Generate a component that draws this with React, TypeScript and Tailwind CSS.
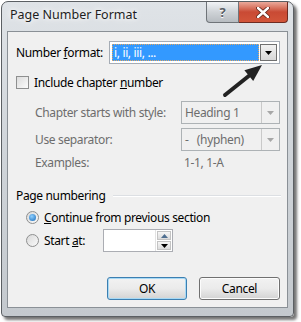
import React from 'react';

const font = { fontFamily: '"Segoe UI", "Noto Sans", "Open Sans", sans-serif' };

function DropArrow({ disabled }: { disabled?: boolean }) {
  return (
    <svg width="7" height="4" viewBox="0 0 7 4">
      <path d="M0 0h7L3.5 4z" fill={disabled ? '#a7a7a7' : '#000'} />
    </svg>
  );
}

function Combo({ value, className }: { value: string; className: string }) {
  return (
    <div className={`flex h-[23px] border border-[#adb2b5] bg-[#f0f0f0] ${className}`}>
      <div className="flex-1 pl-[3px] flex items-center text-[#6d6d6d] whitespace-pre">{value}</div>
      <div className="w-[18px] border-l border-[#c9c9c9] flex items-center justify-center">
        <DropArrow disabled />
      </div>
    </div>
  );
}

function Radio({ checked }: { checked?: boolean }) {
  return (
    <div className="w-[13px] h-[13px] rounded-full border border-[#8e8f8f] bg-gradient-to-br from-[#d9d9d9] to-[#fafafa] flex items-center justify-center mr-[5px]">
      {checked && <div className="w-[7px] h-[7px] rounded-full bg-[radial-gradient(circle_at_40%_35%,#8fd0ff,#1769b8)]" />}
    </div>
  );
}

export default function App() {
  return (
    <div className="w-[301px] h-[322px] bg-white text-[12px] leading-none tracking-[-0.35px] text-black" style={font}>
      <div className="ml-[1px] pt-[1px] w-[296px]">
        <div className="relative w-[293px] h-[316px] rounded-t-[7px] rounded-b-[4px] border border-[#5b5f63] bg-gradient-to-b from-[#dfe3e7] via-[#cfd4d9] to-[#c4c9ce] shadow-[3px_3px_3px_rgba(0,0,0,0.55)] flex flex-col">
          {/* title bar */}
          <div className="h-[29px] flex items-start">
            <div className="pl-[8px] pt-[7px] text-[12.5px] tracking-normal text-[#1e1e1e] [text-shadow:0_0_8px_#fff,0_0_4px_#fff]">Page Number Format</div>
            <div className="ml-auto mr-[5px] flex">
              <div className="w-[33px] h-[21px] rounded-bl-[4px] border border-t-0 border-[#6f7479] bg-gradient-to-b from-[#f1f3f5] via-[#cfd3d7] to-[#b7bcc1] flex items-center justify-center text-[13px] font-bold text-[#5a5f66] [text-shadow:0_1px_0_#fff]">?</div>
              <div className="w-[49px] h-[21px] rounded-br-[4px] border border-t-0 border-l-0 border-[#6d2b22] bg-gradient-to-b from-[#e9a99b] via-[#c94a34] to-[#d2553a] flex items-center justify-center">
                <svg width="14" height="11" viewBox="0 0 14 11">
                  <path d="M2 1l10 9M12 1L2 10" stroke="#5a2015" strokeWidth="4" strokeLinecap="round" />
                  <path d="M2 1l10 9M12 1L2 10" stroke="#fff" strokeWidth="2.4" strokeLinecap="round" />
                </svg>
              </div>
            </div>
          </div>
          {/* client */}
          <div className="mx-[5px] h-[277px] border border-[#8a9096] bg-[#f0f0f0] relative">
            <div className="pl-[8px] pr-[6px] pt-[9px]">
              <div className="flex items-center h-[23px]">
                <span className="w-[93px]">Number <u>f</u>ormat:</span>
                <div className="flex h-[23px] w-[171px] border border-[#a5acb5] bg-white p-[2px]">
                  <div className="flex-1 bg-[#3399ff] text-white flex items-center pl-[2px] outline outline-1 outline-dotted outline-[#e5a65e] -outline-offset-1">i, ii, iii, ...</div>
                  <div className="ml-[1px] w-[17px] border border-[#707070] bg-gradient-to-b from-[#f2f2f2] to-[#d8d8d8] flex items-center justify-center">
                    <DropArrow />
                  </div>
                </div>
              </div>
              <div className="flex items-center h-[13px] mt-[12px]">
                <div className="w-[13px] h-[13px] border border-[#8e8f8f] bg-gradient-to-br from-[#dcdcdc] to-[#fbfbfb] mr-[5px]" />
                <span>Include chapter <u>n</u>umber</span>
              </div>
              <div className="pl-[19px] text-[#6d6d6d]">
                <div className="flex items-center h-[23px] mt-[12px]">
                  <span className="w-[146px]">Chapter starts with style:</span>
                  <Combo value="Heading 1" className="w-[99px]" />
                </div>
                <div className="flex items-center h-[23px] mt-[4px]">
                  <span className="w-[146px]">Use separator:</span>
                  <Combo value="-   (hyphen)" className="w-[99px]" />
                </div>
                <div className="flex items-center h-[14px] mt-[5px]">
                  <span className="w-[146px]">Examples:</span>
                  <span className="pl-[3px]">1-1, 1-A</span>
                </div>
              </div>
              <div className="flex items-center h-[14px] mt-[19px]">
                <span>Page numbering</span>
                <div className="flex-1 ml-[8px] h-[2px] border-t border-b border-[#dcdfe3] border-b-white" />
              </div>
              <div className="pl-[10px]">
                <div className="flex items-center h-[13px] mt-[8px]">
                  <Radio checked />
                  <span><u>C</u>ontinue from previous section</span>
                </div>
                <div className="flex items-center h-[23px] mt-[5px]">
                  <Radio />
                  <span className="w-[59px]">Start <u>a</u>t:</span>
                  <div className="flex h-[23px] w-[70px] border border-[#abadb3] bg-white">
                    <div className="flex-1" />
                    <div className="w-[17px] flex flex-col border-l border-[#e3e3e3] p-[1px] gap-[1px]">
                      <div className="flex-1 bg-gradient-to-b from-[#f6f6f6] to-[#dcdcdc] border border-[#c3c3c3] flex items-center justify-center">
                        <svg width="7" height="4" viewBox="0 0 7 4"><path d="M0 4h7L3.5 0z" fill="#4f6f90" /></svg>
                      </div>
                      <div className="flex-1 bg-gradient-to-b from-[#f6f6f6] to-[#dcdcdc] border border-[#c3c3c3] flex items-center justify-center">
                        <DropArrow />
                      </div>
                    </div>
                  </div>
                </div>
              </div>
              <div className="flex justify-end gap-[12px] mt-[25px] mr-[1px]">
                <div className="w-[80px] h-[23px] rounded-[3px] border border-[#3c7fb1] bg-gradient-to-b from-[#f2f2f2] via-[#ebebeb] to-[#d3d3d3] shadow-[inset_0_0_0_1px_#a7d9f5] flex items-center justify-center">OK</div>
                <div className="w-[81px] h-[23px] rounded-[3px] border border-[#707070] bg-gradient-to-b from-[#f2f2f2] via-[#ebebeb] to-[#d3d3d3] shadow-[inset_0_0_0_1px_#fcfcfc] flex items-center justify-center">Cancel</div>
              </div>
            </div>
            {/* annotation arrow */}
            <svg className="absolute left-[210px] top-[28px]" width="50" height="42" viewBox="0 0 50 42">
              <path d="M7 35L32 15" stroke="#222" strokeWidth="4" strokeLinecap="round" />
              <path d="M44 5L26.4 10.3L35.2 21.1z" fill="#222" />
            </svg>
          </div>
        </div>
      </div>
    </div>
  );
}
